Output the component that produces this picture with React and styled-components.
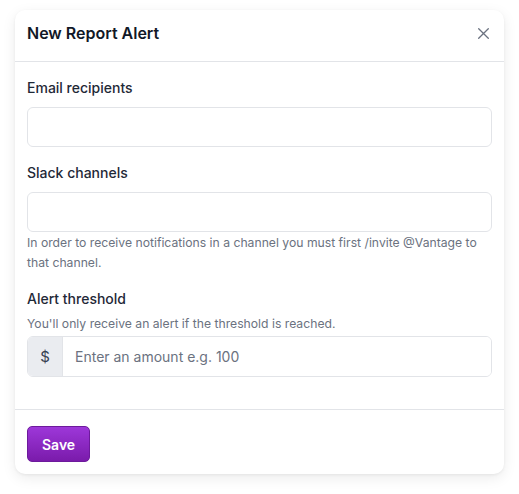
import React from "react";
import styled, { createGlobalStyle } from "styled-components";

const GlobalStyle = createGlobalStyle`
  * { box-sizing: border-box; }
  body {
    margin: 0;
    background: #ffffff;
    font-family: Inter, "Noto Sans", sans-serif;
    -webkit-font-smoothing: antialiased;
  }
`;

const Page = styled.div`
  padding: 10px 15px 20px 15px;
`;

const Card = styled.div`
  width: 489px;
  background: #fff;
  border-radius: 10px;
  box-shadow: 0 4px 14px rgba(0, 0, 0, 0.08), 0 1px 3px rgba(0, 0, 0, 0.06);
  overflow: hidden;
`;

const Header = styled.div`
  display: flex;
  align-items: center;
  justify-content: space-between;
  height: 52px;
  padding: 0 14px 5px 12px;
  border-bottom: 1px solid #e2e4e8;
`;

const Title = styled.h2`
  margin: 0;
  font-size: 16px;
  font-weight: 600;
  color: #111827;
`;

const CloseButton = styled.button`
  display: flex;
  align-items: center;
  justify-content: center;
  width: 14px;
  height: 14px;
  padding: 0;
  border: none;
  background: none;
  color: #6b7280;
  cursor: pointer;
`;

const Body = styled.div`
  display: flex;
  flex-direction: column;
  gap: 16px;
  padding: 16px 12px 32px 12px;
`;

const Field = styled.div`
  display: flex;
  flex-direction: column;
`;

const Label = styled.label`
  font-size: 14px;
  line-height: 20px;
  font-weight: 500;
  color: #1f2937;
  margin-bottom: ${(p) => (p.$tight ? "6px" : "9px")};
`;

const Help = styled.p`
  margin: ${(p) => (p.$above ? "0 0 3px 0" : "1px 0 0 0")};
  font-size: 12.2px;
  line-height: ${(p) => (p.$above ? "18px" : "20px")};
  color: #6b7280;
`;

const TextInput = styled.input`
  width: 100%;
  height: 40px;
  padding: 0 12px;
  border: 1px solid #e2e4e8;
  border-radius: 6px;
  font-family: inherit;
  font-size: 14px;
  outline: none;
`;

const Group = styled.div`
  display: flex;
  height: 41px;
  border: 1px solid #e2e4e8;
  border-radius: 6px;
  overflow: hidden;
`;

const Addon = styled.span`
  display: flex;
  align-items: center;
  justify-content: center;
  width: 35px;
  background: #eaecf0;
  border-right: 1px solid #e2e4e8;
  font-size: 15px;
  color: #374151;
`;

const GroupInput = styled.input`
  flex: 1;
  border: none;
  padding: 0 12px;
  font-family: inherit;
  font-size: 14px;
  color: #111827;
  outline: none;
  &::placeholder {
    color: #6b7280;
  }
`;

const Footer = styled.div`
  display: flex;
  padding: 16px 12px 12px 12px;
  border-top: 1px solid #e2e4e8;
`;

const SaveButton = styled.button`
  height: 36px;
  padding: 0 14px;
  border: 1px solid #6d1a9c;
  border-radius: 5px;
  background: linear-gradient(180deg, #9d37d9 0%, #7a1bab 100%);
  color: #fff;
  font-family: inherit;
  font-size: 14px;
  font-weight: 600;
  cursor: pointer;
`;

const App = () => {
  return (
    <Page>
      <GlobalStyle />
      <Card>
        <Header>
          <Title>New Report Alert</Title>
          <CloseButton aria-label="Close">
            <svg width="11" height="11" viewBox="0 0 11 11" fill="none" stroke="currentColor" strokeWidth="1.3" strokeLinecap="round">
              <path d="M0.7 0.7L10.3 10.3M10.3 0.7L0.7 10.3" />
            </svg>
          </CloseButton>
        </Header>
        <Body>
          <Field>
            <Label>Email recipients</Label>
            <TextInput type="text" />
          </Field>
          <Field>
            <Label>Slack channels</Label>
            <TextInput type="text" />
            <Help>
              In order to receive notifications in a channel you must first /invite @Vantage to that channel.
            </Help>
          </Field>
          <Field>
            <Label $tight>Alert threshold</Label>
            <Help $above>You'll only receive an alert if the threshold is reached.</Help>
            <Group>
              <Addon>$</Addon>
              <GroupInput type="text" placeholder="Enter an amount e.g. 100" />
            </Group>
          </Field>
        </Body>
        <Footer>
          <SaveButton>Save</SaveButton>
        </Footer>
      </Card>
    </Page>
  );
};

export default App;
